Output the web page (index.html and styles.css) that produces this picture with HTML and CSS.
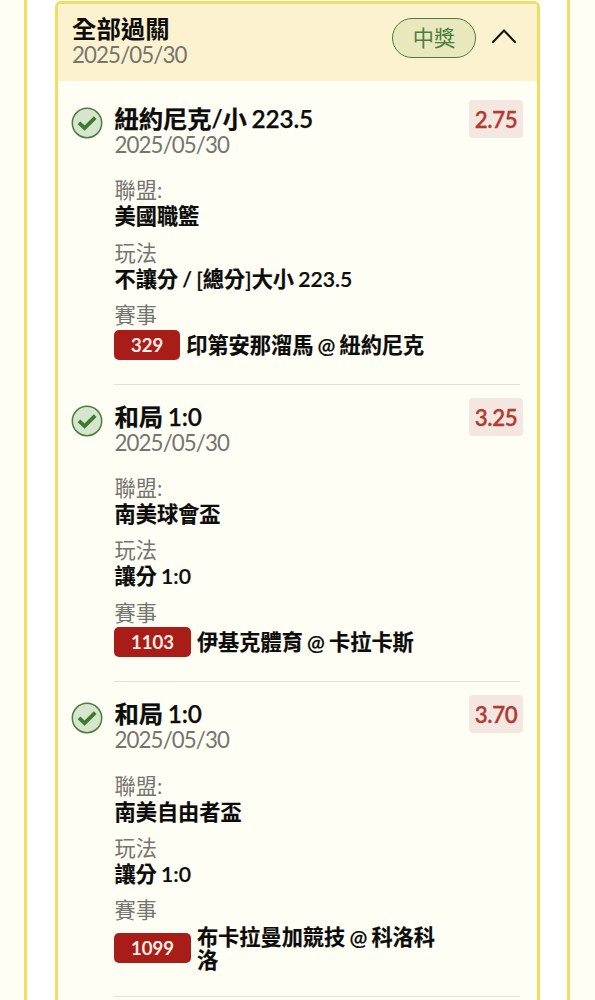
FILE: index.html
```html
<!DOCTYPE html>
<html lang="zh-Hant">
<head>
  <meta charset="utf-8">
  <title>全部過關</title>
  <link rel="stylesheet" href="styles.css">
</head>
<body>
  <main class="panel">
    <section class="card">
      <header class="card-header">
        <div>
          <h1 class="card-title">全部過關</h1>
          <div class="date">2025/05/30</div>
        </div>
        <span class="status">中獎</span>
        <svg class="chevron" viewBox="0 0 24 14"><path d="M1 13 L12 1.5 L23 13" /></svg>
      </header>

      <article class="leg">
        <svg class="check" viewBox="0 0 32 32"><circle cx="16" cy="16" r="14.7" /><path d="M8 15.8 L13.6 21.2 L24.2 10.6" /></svg>
        <div class="leg-body">
          <h2 class="leg-title">紐約尼克/小 223.5</h2>
          <div class="date">2025/05/30</div>
          <dl class="details">
            <dt>聯盟:</dt>
            <dd>美國職籃</dd>
            <dt>玩法</dt>
            <dd>不讓分 / [總分]大小 223.5</dd>
            <dt>賽事</dt>
            <dd class="match"><span class="code">329</span><span class="teams">印第安那溜馬 @ 紐約尼克</span></dd>
          </dl>
        </div>
        <span class="odds">2.75</span>
      </article>

      <article class="leg">
        <svg class="check" viewBox="0 0 32 32"><circle cx="16" cy="16" r="14.7" /><path d="M8 15.8 L13.6 21.2 L24.2 10.6" /></svg>
        <div class="leg-body">
          <h2 class="leg-title">和局 1:0</h2>
          <div class="date">2025/05/30</div>
          <dl class="details">
            <dt>聯盟:</dt>
            <dd>南美球會盃</dd>
            <dt>玩法</dt>
            <dd>讓分 1:0</dd>
            <dt>賽事</dt>
            <dd class="match"><span class="code">1103</span><span class="teams">伊基克體育 @ 卡拉卡斯</span></dd>
          </dl>
        </div>
        <span class="odds">3.25</span>
      </article>

      <article class="leg">
        <svg class="check" viewBox="0 0 32 32"><circle cx="16" cy="16" r="14.7" /><path d="M8 15.8 L13.6 21.2 L24.2 10.6" /></svg>
        <div class="leg-body">
          <h2 class="leg-title">和局 1:0</h2>
          <div class="date">2025/05/30</div>
          <dl class="details">
            <dt>聯盟:</dt>
            <dd>南美自由者盃</dd>
            <dt>玩法</dt>
            <dd>讓分 1:0</dd>
            <dt>賽事</dt>
            <dd class="match"><span class="code">1099</span><span class="teams">布卡拉曼加競技 @ 科洛科洛</span></dd>
          </dl>
        </div>
        <span class="odds">3.70</span>
      </article>
    </section>
  </main>
</body>
</html>
```
FILE: styles.css
```css
:root {
  --bg: #fffef5;
  --gold: #f3dc62;
  --header: #fcf2cf;
  --red: #a81d17;
  --green: #4b7d3c;
  --muted: #757570;
}
* {
  box-sizing: border-box;
}
body {
  margin: 0;
  height: 1000px;
  overflow: hidden;
  background: var(--bg);
  color: #0c0c0a;
  font-family: Lato, "Noto Sans CJK TC", sans-serif;
}
h1, h2, dl, dd {
  margin: 0;
}
.panel {
  height: 1000px;
  margin: 0 25px 0 24px;
  padding: 1px 27px 0 28px;
  background: #fff;
  border: solid var(--gold);
  border-width: 0 3px;
}
.card {
  height: 1020px;
  background: var(--bg);
  border: 3px solid var(--gold);
  border-radius: 6px;
  overflow: hidden;
}
.card-header {
  display: flex;
  height: 77px;
  padding: 12px 21px 0 14px;
  background: var(--header);
}
.card-title, .leg-title {
  font-size: 24.4px;
  line-height: 26px;
  font-weight: 600;
  word-spacing: -1.2px;
}
.leg-title {
  letter-spacing: -0.15px;
  -webkit-text-stroke: 0.25px;
}
.date {
  font-size: 22.3px;
  line-height: 25px;
  letter-spacing: -0.9px;
  color: var(--muted);
}
.status {
  width: 84px;
  height: 40px;
  margin: 2px 16px 0 auto;
  border: 1.5px solid var(--green);
  border-radius: 20px;
  background: #e9e7bd;
  color: var(--green);
  font-size: 21.2px;
  line-height: 38px;
  text-align: center;
}
.chevron {
  width: 24px;
  height: 14px;
  margin-top: 13px;
  fill: none;
  stroke: #111;
  stroke-width: 2;
  stroke-linecap: round;
}
.leg {
  display: flex;
  padding: 13px 14px 0 13px;
}
.card-header + .leg {
  padding-top: 19px;
}
.check {
  flex: none;
  width: 32px;
  height: 32px;
  margin: 7px 11px 0 0;
  fill: none;
  stroke: var(--green);
}
.check circle {
  fill: #d6e5cd;
  stroke-width: 1.5;
}
.check path {
  stroke: #3f7a31;
  stroke-width: 3.8;
}
.leg-body {
  flex: none;
  width: 406px;
  padding: 6px 0 0 0.5px;
  border-bottom: 1px solid #e2e1d9;
}
.details {
  padding: 20.4px 0 24px;
  font-size: 21.2px;
  line-height: 26px;
}
.details dt {
  color: var(--muted);
}
.details dd {
  margin-bottom: 10.4px;
  font-weight: 600;
  word-spacing: -1.1px;
  -webkit-text-stroke: 0.2px;
}
.details .match {
  display: flex;
  align-items: center;
  min-height: 30px;
  margin: 1.4px 0 0;
  line-height: 23px;
}
.code {
  height: 30px;
  margin: 0 6px 0 -0.5px;
  padding: 0 17px;
  border-radius: 5px;
  background: var(--red);
  color: #fdf3ec;
  font-size: 18.5px;
  line-height: 30px;
}
.teams {
  max-width: 242px;
  padding-top: 1px;
}
.odds {
  flex: none;
  width: 54px;
  height: 38px;
  margin-left: -51px;
  border-radius: 4px;
  background: #f4e6e1;
  color: #b33a30;
  font-size: 22.3px;
  line-height: 40px;
  letter-spacing: -0.4px;
  font-weight: 600;
  text-align: center;
  -webkit-text-stroke: 0.3px;
}
```
